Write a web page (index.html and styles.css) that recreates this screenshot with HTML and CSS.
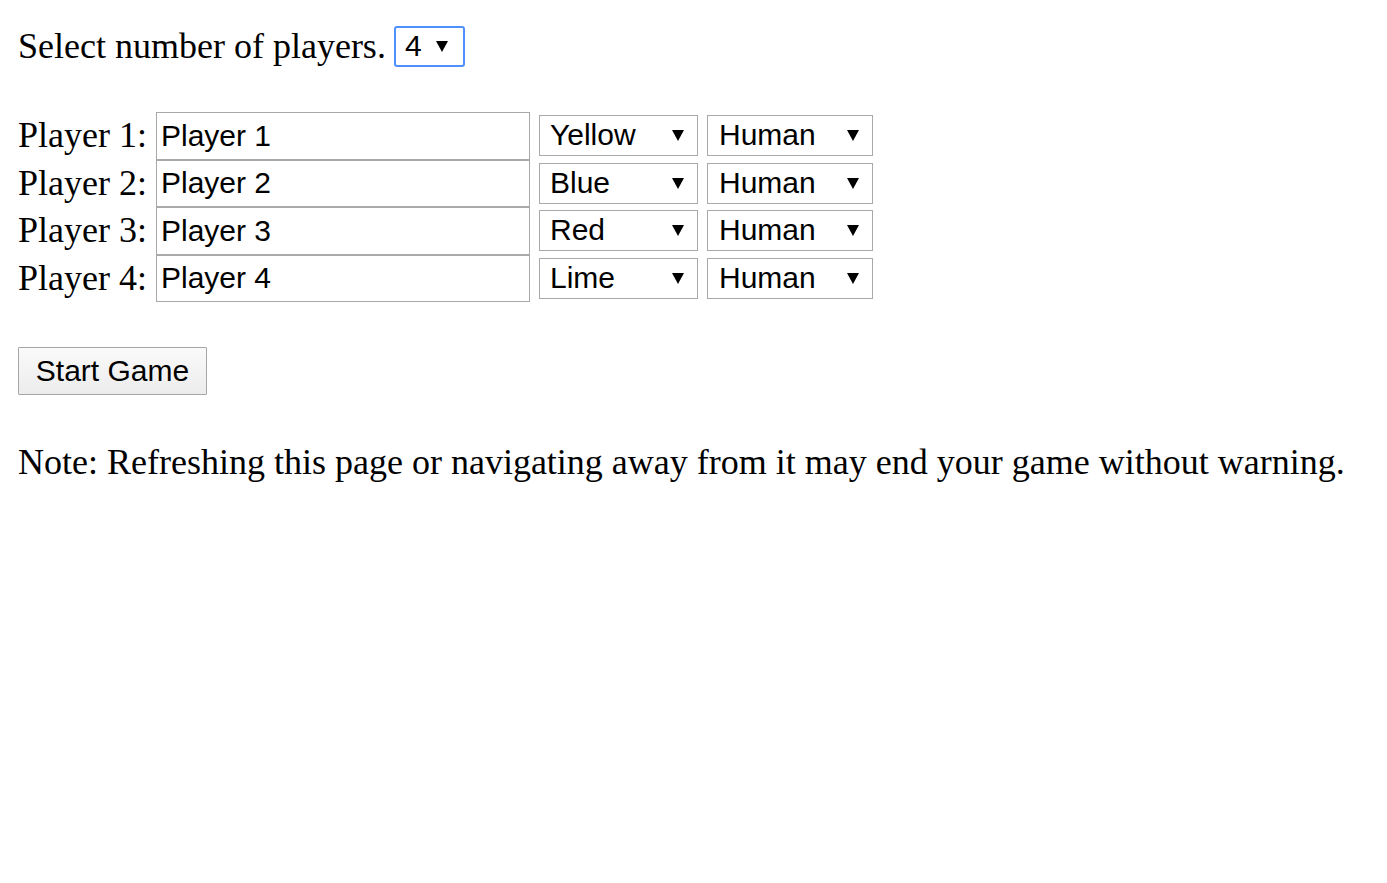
FILE: index.html
```html
<!DOCTYPE html>
<html>
<head>
<meta charset="utf-8">
<link rel="stylesheet" href="styles.css">
</head>
<body>
<div class="top">
  <span>Select number of players.</span>
  <div class="select select-num focused"><span>4</span><svg class="arrow" viewBox="0 0 12 11"><path d="M0 0H12L6 11Z"/></svg></div>
</div>

<div class="players">
  <div class="row">
    <span class="label">Player 1:</span>
    <div class="input">Player 1</div>
    <div class="select select-color"><span>Yellow</span><svg class="arrow" viewBox="0 0 12 11"><path d="M0 0H12L6 11Z"/></svg></div>
    <div class="select select-type"><span>Human</span><svg class="arrow" viewBox="0 0 12 11"><path d="M0 0H12L6 11Z"/></svg></div>
  </div>
  <div class="row">
    <span class="label">Player 2:</span>
    <div class="input">Player 2</div>
    <div class="select select-color"><span>Blue</span><svg class="arrow" viewBox="0 0 12 11"><path d="M0 0H12L6 11Z"/></svg></div>
    <div class="select select-type"><span>Human</span><svg class="arrow" viewBox="0 0 12 11"><path d="M0 0H12L6 11Z"/></svg></div>
  </div>
  <div class="row">
    <span class="label">Player 3:</span>
    <div class="input">Player 3</div>
    <div class="select select-color"><span>Red</span><svg class="arrow" viewBox="0 0 12 11"><path d="M0 0H12L6 11Z"/></svg></div>
    <div class="select select-type"><span>Human</span><svg class="arrow" viewBox="0 0 12 11"><path d="M0 0H12L6 11Z"/></svg></div>
  </div>
  <div class="row">
    <span class="label">Player 4:</span>
    <div class="input">Player 4</div>
    <div class="select select-color"><span>Lime</span><svg class="arrow" viewBox="0 0 12 11"><path d="M0 0H12L6 11Z"/></svg></div>
    <div class="select select-type"><span>Human</span><svg class="arrow" viewBox="0 0 12 11"><path d="M0 0H12L6 11Z"/></svg></div>
  </div>
</div>

<div class="actions">
  <button class="start">Start Game</button>
</div>

<p class="note">Note: Refreshing this page or navigating away from it may end your game without warning.</p>
</body>
</html>
```

FILE: styles.css
```css
html, body {
  background: #ffffff;
}
body {
  margin: 0;
  padding: 26px 18px;
  font-family: "Liberation Serif", "Times New Roman", serif;
  font-size: 36px;
  color: #000;
}
.top {
  display: flex;
  align-items: center;
  gap: 8px;
  height: 41px;
  line-height: 41px;
}
.select {
  box-sizing: border-box;
  display: flex;
  align-items: center;
  justify-content: space-between;
  height: 41px;
  border: 1px solid #a9a9a9;
  background: #fff;
  font-family: "Liberation Sans", Arial, sans-serif;
  font-size: 30px;
  line-height: 1;
  padding: 0 13px 0 10px;
}
.select span {
  padding-bottom: 1px;
}
.arrow {
  width: 12px;
  height: 11px;
  fill: #000;
  flex: none;
}
.select-num {
  width: 71px;
  padding: 0 15px 0 9px;
  border: 2px solid #4d90fe;
  border-radius: 3px;
}
.players {
  margin-top: 45px;
  display: flex;
  flex-direction: column;
}
.row {
  display: flex;
  align-items: center;
  height: 47.5px;
  gap: 9px;
}
.label {
  width: 129px;
  line-height: 41px;
}
.input {
  box-sizing: border-box;
  width: 374px;
  height: 47.5px;
  border: 1px solid #a9a9a9;
  padding: 0 4px;
  display: flex;
  align-items: center;
  font-family: "Liberation Sans", Arial, sans-serif;
  font-size: 30px;
}
.select-color {
  width: 159px;
}
.select-type {
  width: 166px;
  padding-left: 11px;
}
.actions {
  margin-top: 45px;
}
.start {
  box-sizing: border-box;
  width: 189px;
  height: 48px;
  border: 1px solid #a6a6a6;
  border-radius: 1px;
  background: linear-gradient(#fafafa, #ececec);
  font-family: "Liberation Sans", Arial, sans-serif;
  font-size: 30px;
  color: #000;
  padding: 0;
  margin: 0;
}
.note {
  margin: 47px 0 0;
  line-height: 41px;
}
```
